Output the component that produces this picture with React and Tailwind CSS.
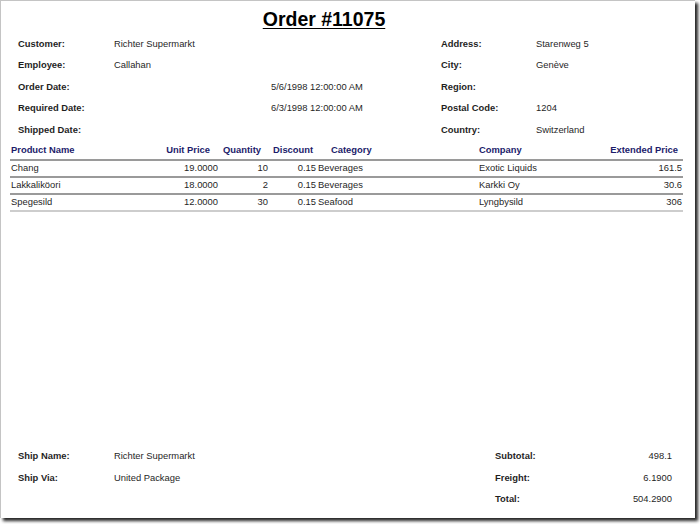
import React from 'react';

const FONT = { fontFamily: '"Liberation Sans", Arial, sans-serif' };

const INFO_ROWS = [
  { label: 'Customer:', value: 'Richter Supermarkt', rLabel: 'Address:', rValue: 'Starenweg 5' },
  { label: 'Employee:', value: 'Callahan', rLabel: 'City:', rValue: 'Genève' },
  { label: 'Order Date:', date: '5/6/1998 12:00:00 AM', rLabel: 'Region:', rValue: '' },
  { label: 'Required Date:', date: '6/3/1998 12:00:00 AM', rLabel: 'Postal Code:', rValue: '1204' },
  { label: 'Shipped Date:', rLabel: 'Country:', rValue: 'Switzerland' }
];

const ITEMS = [
  { name: 'Chang', price: '19.0000', qty: 10, discount: '0.15', category: 'Beverages', company: 'Exotic Liquids', ext: '161.5' },
  { name: 'Lakkaliköori', price: '18.0000', qty: 2, discount: '0.15', category: 'Beverages', company: 'Karkki Oy', ext: '30.6' },
  { name: 'Spegesild', price: '12.0000', qty: 30, discount: '0.15', category: 'Seafood', company: 'Lyngbysild', ext: '306' }
];

function InfoRow({ row }) {
  return (
    <div className="flex items-center h-[21.5px]">
      <div className="w-[96px] font-bold">{row.label}</div>
      <div className="w-[327px] flex">
        {row.value && <span>{row.value}</span>}
        {row.date && <span className="pl-[157px]">{row.date}</span>}
      </div>
      <div className="w-[95px] font-bold">{row.rLabel}</div>
      <div>{row.rValue}</div>
    </div>
  );
}

export default function App() {
  return (
    <div className="w-[700px] h-[524px] bg-white overflow-hidden text-[9.4px] text-[#1f1f1f]" style={FONT}>
      <div className="w-[695px] h-[518px] bg-white border-t border-l border-[#c4c4c4] shadow-[3px_3px_3px_rgba(0,0,0,0.85)] flex flex-col">
        {/* title */}
        <div className="w-[646px] text-center pt-[7px] h-[32px]">
          <span className="text-[19.5px] font-bold underline underline-offset-[2px] text-black leading-[22px]">Order #11075</span>
        </div>

        {/* order info */}
        <div className="pl-[17px] flex flex-col">
          {INFO_ROWS.map((r) => <InfoRow key={r.label} row={r} />)}
        </div>

        {/* items table */}
        <div className="ml-[9px] w-[673px] mt-[2px]">
          <div className="flex items-center h-[18px] font-bold text-[#1c1c6b] border-b-2 border-[#9a9a9a]">
            <div className="w-[140px] pl-[1px]">Product Name</div>
            <div className="w-[69px] text-right pr-[9px]">Unit Price</div>
            <div className="w-[50px] pl-[4px]">Quantity</div>
            <div className="w-[48px] pl-[4px]">Discount</div>
            <div className="w-[162px] pl-[14px]">Category</div>
            <div className="w-[121px]">Company</div>
            <div className="w-[83px] text-right pr-[5px]">Extended Price</div>
          </div>
          {ITEMS.map((it, i) => (
            <div
              key={it.name}
              className={`flex items-center h-[17px] border-b-2 ${i === ITEMS.length - 1 ? 'border-[#cdcdcd]' : 'border-[#9a9a9a]'}`}
            >
              <div className="w-[140px] pl-[1px]">{it.name}</div>
              <div className="w-[69px] text-right pr-[1px]">{it.price}</div>
              <div className="w-[50px] text-right pr-[1px]">{it.qty}</div>
              <div className="w-[48px] text-right pr-[1px]">{it.discount}</div>
              <div className="w-[162px] pl-[1px]">{it.category}</div>
              <div className="w-[121px]">{it.company}</div>
              <div className="w-[83px] text-right pr-[1px]">{it.ext}</div>
            </div>
          ))}
        </div>

        <div className="flex-1" />

        {/* footer */}
        <div className="flex pl-[17px] pb-[8px]">
          <div className="flex flex-col w-[477px]">
            <div className="flex items-center h-[21.5px]">
              <div className="w-[96px] font-bold">Ship Name:</div>
              <div>Richter Supermarkt</div>
            </div>
            <div className="flex items-center h-[21.5px]">
              <div className="w-[96px] font-bold">Ship Via:</div>
              <div>United Package</div>
            </div>
          </div>
          <div className="flex flex-col w-[177px]">
            {[['Subtotal:', '498.1'], ['Freight:', '6.1900'], ['Total:', '504.2900']].map(([l, v]) => (
              <div key={l} className="flex items-center justify-between h-[21.5px]">
                <div className="font-bold">{l}</div>
                <div>{v}</div>
              </div>
            ))}
          </div>
        </div>
      </div>
    </div>
  );
}
